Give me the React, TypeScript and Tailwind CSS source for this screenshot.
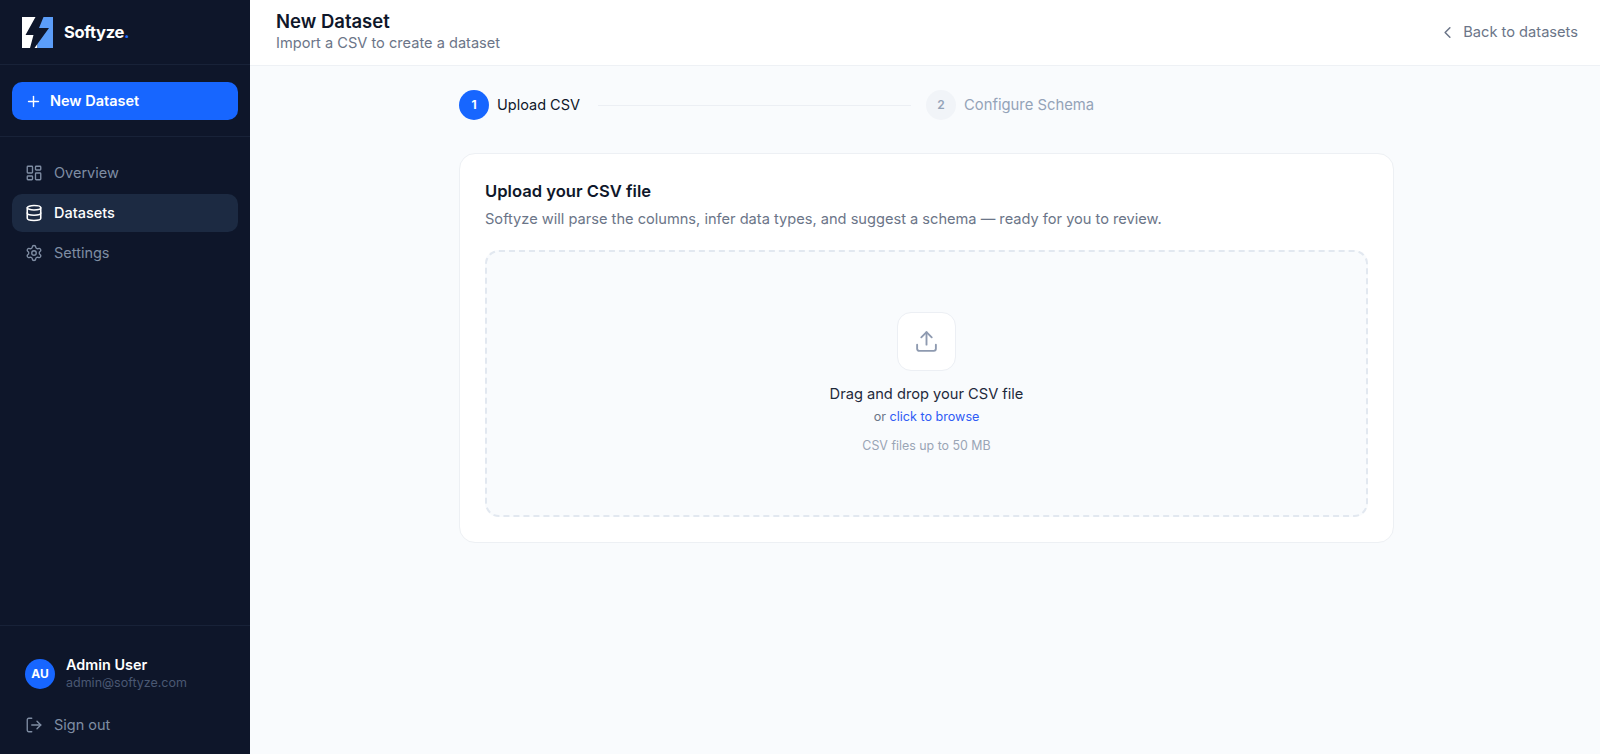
import { ChevronLeft, Database, LayoutDashboard, LogOut, Plus, Settings, Upload } from "lucide-react";

function Logo() {
  return (
    <svg width="31" height="31" viewBox="0 0 31 31" className="shrink-0">
      <rect x="0" y="0" width="15.5" height="31" fill="#ffffff" />
      <rect x="15.5" y="0" width="15.5" height="31" fill="#5b9df9" />
      <polygon points="13.5,0 21.5,0 17,11 27,11 12.5,31 8,31 11.5,18 3.5,18" fill="#0e162a" />
    </svg>
  );
}

function NavItem({ icon, label, active }: { icon: React.ReactNode; label: string; active?: boolean }) {
  return (
    <div
      className={
        active
          ? "flex h-[38px] items-center gap-[11.5px] rounded-[10px] bg-[#1c2a42] px-[12.5px] text-[14.5px] font-medium text-white"
          : "flex h-[38px] items-center gap-[11.5px] rounded-[10px] px-[12.5px] text-[14.5px] font-normal text-[#7f8da3]"
      }
    >
      {icon}
      <span>{label}</span>
    </div>
  );
}

function Sidebar() {
  return (
    <aside className="flex h-full w-[250px] shrink-0 flex-col bg-[#0e162a]">
      <div className="flex h-[65px] items-center gap-[11px] border-b border-[#182238] pl-[22px]">
        <Logo />
        <span className="text-[16.5px] font-bold tracking-[-0.3px] text-white">
          Softyze<span className="text-[#1f6bff]">.</span>
        </span>
      </div>
      <div className="border-b border-[#182238] px-3 pt-[17px] pb-4">
        <div className="flex h-[38px] items-center gap-[8.5px] rounded-[10px] bg-[#1766ff] pl-[12.5px] text-[14.5px] font-semibold text-white">
          <Plus size={17} strokeWidth={2} />
          <span>New Dataset</span>
        </div>
      </div>
      <nav className="flex flex-col gap-[2px] px-3 pt-[17px]">
        <NavItem icon={<LayoutDashboard size={18} strokeWidth={1.8} />} label="Overview" />
        <NavItem icon={<Database size={18} strokeWidth={2.1} />} label="Datasets" active />
        <NavItem icon={<Settings size={18} strokeWidth={1.8} />} label="Settings" />
      </nav>
      <div className="mt-auto border-t border-[#182238] px-3 pt-[30px] pb-[10px]">
        <div className="flex items-center gap-[11px] px-[13px]">
          <div className="flex h-[30px] w-[30px] items-center justify-center rounded-full bg-[#1766ff] text-[12px] font-bold text-white">
            AU
          </div>
          <div>
            <div className="text-[14.4px] leading-[18px] font-semibold text-white">Admin User</div>
            <div className="text-[12.5px] leading-[18px] text-[#4a5873]">admin@softyze.com</div>
          </div>
        </div>
        <div className="mt-[14px]">
          <NavItem icon={<LogOut size={18} strokeWidth={1.8} />} label="Sign out" />
        </div>
      </div>
    </aside>
  );
}

function Stepper() {
  return (
    <div className="flex items-center">
      <div className="flex h-[30px] w-[30px] items-center justify-center rounded-full bg-[#1766ff] text-[12px] font-bold text-white">
        1
      </div>
      <span className="ml-[8px] text-[14.5px] font-normal text-[#0f172a]">Upload CSV</span>
      <div className="mr-[15px] ml-[18px] h-px w-[313px] bg-[#eceff4]" />
      <div className="flex h-[30px] w-[30px] items-center justify-center rounded-full bg-[#f1f4f8] text-[12px] font-semibold text-[#94a3b8]">
        2
      </div>
      <span className="ml-[8px] text-[14.8px] font-normal text-[#94a3b8]">Configure Schema</span>
    </div>
  );
}

function DropZone() {
  return (
    <div className="mt-[21px] flex h-[267px] flex-col items-center rounded-[14px] border-2 border-dashed border-[#e2e8f0] bg-[#f9fbfd] pt-[60px]">
      <div className="flex h-[59px] w-[59px] items-center justify-center rounded-[14px] border border-[#eceff4] bg-white text-[#8e9ab0]">
        <Upload size={25} strokeWidth={1.8} />
      </div>
      <div className="mt-[13px] text-[14.65px] leading-[20px] font-normal text-[#1e293b]">Drag and drop your CSV file</div>
      <div className="mt-[4px] text-[12.6px] leading-[18px] text-[#6b7588]">
        or <span className="font-normal text-[#2f5bf5]">click to browse</span>
      </div>
      <div className="mt-[11px] text-[12.4px] leading-[18px] text-[#9aa5b5]">CSV files up to 50 MB</div>
    </div>
  );
}

export default function App() {
  return (
    <div className="flex h-[754px] w-[1600px] overflow-hidden bg-[#f9fbfd] font-['Inter',sans-serif]">
      <Sidebar />
      <main className="flex min-w-0 flex-1 flex-col">
        <header className="flex h-[66px] items-center justify-between border-b border-[#eef1f5] bg-white pr-[22px] pb-[3px] pl-[26px]">
          <div>
            <h1 className="text-[18.5px] leading-[24px] font-semibold text-[#0f172a]">New Dataset</h1>
            <p className="text-[14.6px] leading-[20px] text-[#6b7588]">Import a CSV to create a dataset</p>
          </div>
          <div className="mt-[4px] flex items-center gap-[5px] text-[14.65px] font-normal text-[#6b7588]">
            <ChevronLeft size={19} strokeWidth={1.9} />
            <span className="ml-[1px]">Back to datasets</span>
          </div>
        </header>
        <div className="ml-[209px] flex w-[935px] flex-col pt-[24px]">
          <Stepper />
          <section className="mt-[33px] rounded-[16px] border border-[#edf0f4] bg-white p-[25px]">
            <h2 className="text-[16.6px] leading-[24px] font-semibold text-[#0f172a]">Upload your CSV file</h2>
            <p className="mt-[6px] text-[14.62px] leading-[20px] text-[#6b7588]">
              Softyze will parse the columns, infer data types, and suggest a schema — ready for you to review.
            </p>
            <DropZone />
          </section>
        </div>
      </main>
    </div>
  );
}
